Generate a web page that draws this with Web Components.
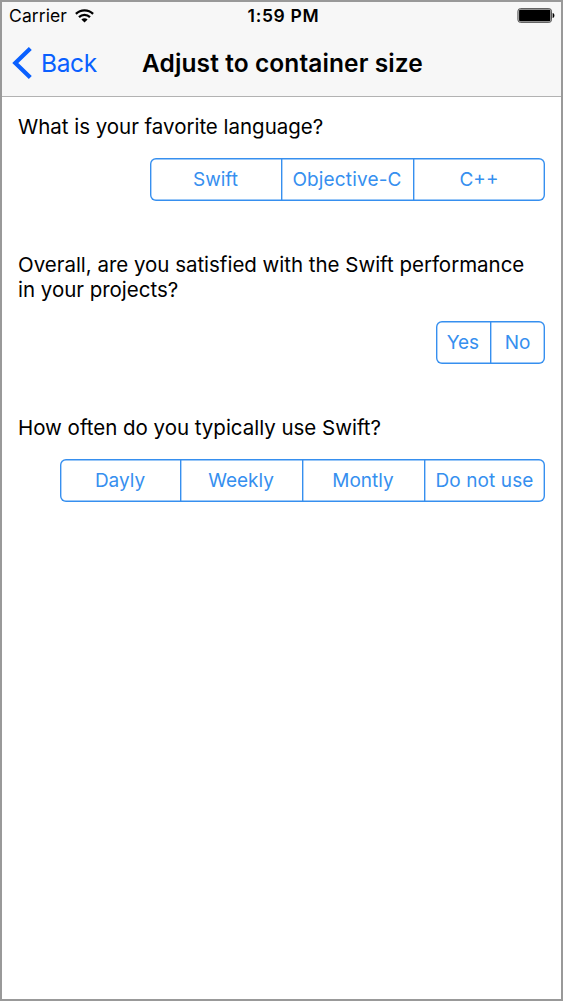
<!DOCTYPE html>
<html lang="en"><head><meta charset="utf-8"><title>Adjust to container size</title>
<style>
html,body{margin:0;height:100%}
body{font-family:Inter,"Liberation Sans",sans-serif;color:#000;background:#fff}
</style></head><body>
<phone-screen>
  <status-bar slot="top"></status-bar>
  <nav-bar slot="top" back="Back">Adjust to container size</nav-bar>
  <survey-question label="What is your favorite language?">
    <segmented-control style="--cols:131px 132px 132px"><segment-item>Swift</segment-item><segment-item style="letter-spacing:.15px">Objective-C</segment-item><segment-item>C++</segment-item></segmented-control>
  </survey-question>
  <survey-question label="Overall, are you satisfied with the Swift performance in your projects?">
    <segmented-control style="--cols:54.5px 55px"><segment-item style="letter-spacing:-.2px">Yes</segment-item><segment-item>No</segment-item></segmented-control>
  </survey-question>
  <survey-question label="How often do you typically use Swift?">
    <segmented-control style="--cols:120px 122px 122px 121px"><segment-item>Dayly</segment-item><segment-item>Weekly</segment-item><segment-item>Montly</segment-item><segment-item style="letter-spacing:.1px">Do not use</segment-item></segmented-control>
  </survey-question>
</phone-screen>
<script>
const define=(name,html,setup)=>customElements.define(name,class extends HTMLElement{
  connectedCallback(){
    if(this.shadowRoot)return;
    const t=document.createElement('template');t.innerHTML=html;
    this.attachShadow({mode:'open'}).append(t.content.cloneNode(true));
    if(setup)setup(this,this.shadowRoot);
  }
});
define('phone-screen',`<style>
:host{display:flex;flex-direction:column;box-sizing:border-box;height:100vh;border:2px solid #999}
header{background:#f7f7f7;height:94px;border-bottom:1px solid #b2b2b2;flex:none}
main{padding:17px 16px 0;display:flex;flex-direction:column;gap:51.5px}
</style><header><slot name="top"></slot></header><main><slot></slot></main>`);
define('status-bar',`<style>
:host{display:grid;grid-template-columns:1fr auto 1fr;align-items:center;height:27px;padding:0 6px 0 7px;font-size:17.5px}
.l{display:flex;align-items:center;gap:8px}.l span{letter-spacing:.1px}.t{font-weight:600;letter-spacing:.7px;padding-left:3px}.r{justify-self:end;display:flex}svg{display:block}
</style><div class="l"><span>Carrier</span><svg width="19" height="14" viewBox="0 0 19 14"><g fill="none" stroke="#000" stroke-width="2.2"><path d="M.9 4.9a12.2 12.2 0 0 1 17.2 0"/><path d="M4 8.1a7.8 7.8 0 0 1 11 0"/></g><path d="M9.5 13.6 6.4 10.5a4.4 4.4 0 0 1 6.2 0z"/></svg></div><span class="t">1:59 PM</span>
<div class="r"><svg width="38" height="15" viewBox="0 0 38 15"><rect x=".9" y=".6" width="33.6" height="13.8" rx="2.6" fill="#ccc" stroke="#555" stroke-width="1"/><rect x="2.1" y="1.8" width="31.2" height="11.4" rx="1.2"/><path d="M35.6 5c1 .2 1.8 1.2 1.8 2.5s-.8 2.3-1.8 2.5z"/></svg></div>`);
define('nav-bar',`<style>
:host{display:grid;grid-template-columns:1fr auto 1fr;align-items:center;height:67px;padding:0 8px 0 9px;font-size:24.5px}
.b{display:flex;align-items:center;gap:9px;color:#0a60ff}#b{letter-spacing:-.35px}h1{margin:0;font-size:24.5px;font-weight:600;letter-spacing:.1px;white-space:nowrap;padding-left:1px}svg{display:block}
</style><div class="b"><svg width="21" height="32" viewBox="0 0 21 32"><path d="M19.3 1.5 4.3 16l15 14.5" fill="none" stroke="#0a60ff" stroke-width="4.2"/></svg><span id="b"></span></div><h1><slot></slot></h1>`,(h,r)=>{r.getElementById('b').textContent=h.getAttribute('back')});
define('survey-question',`<style>
:host{display:flex;flex-direction:column;gap:18.5px}
p{margin:0;font-size:20.5px;line-height:25px;letter-spacing:-.02px}
::slotted(*){align-self:flex-end}
</style><p></p><slot></slot>`,(h,r)=>{r.querySelector('p').textContent=h.getAttribute('label')});
define('segmented-control',`<style>
:host{display:grid;grid-template-columns:var(--cols);height:43px;border-radius:6px;box-shadow:inset 0 0 0 1.4px #368fef}
</style><slot></slot>`);
define('segment-item',`<style>
:host{display:flex;align-items:center;justify-content:center;color:#368fef;font-size:19px;white-space:nowrap}
:host(:not(:first-child)){box-shadow:inset 1.4px 0 #368fef}
</style><span><slot></slot></span>`);
</script></body></html>
